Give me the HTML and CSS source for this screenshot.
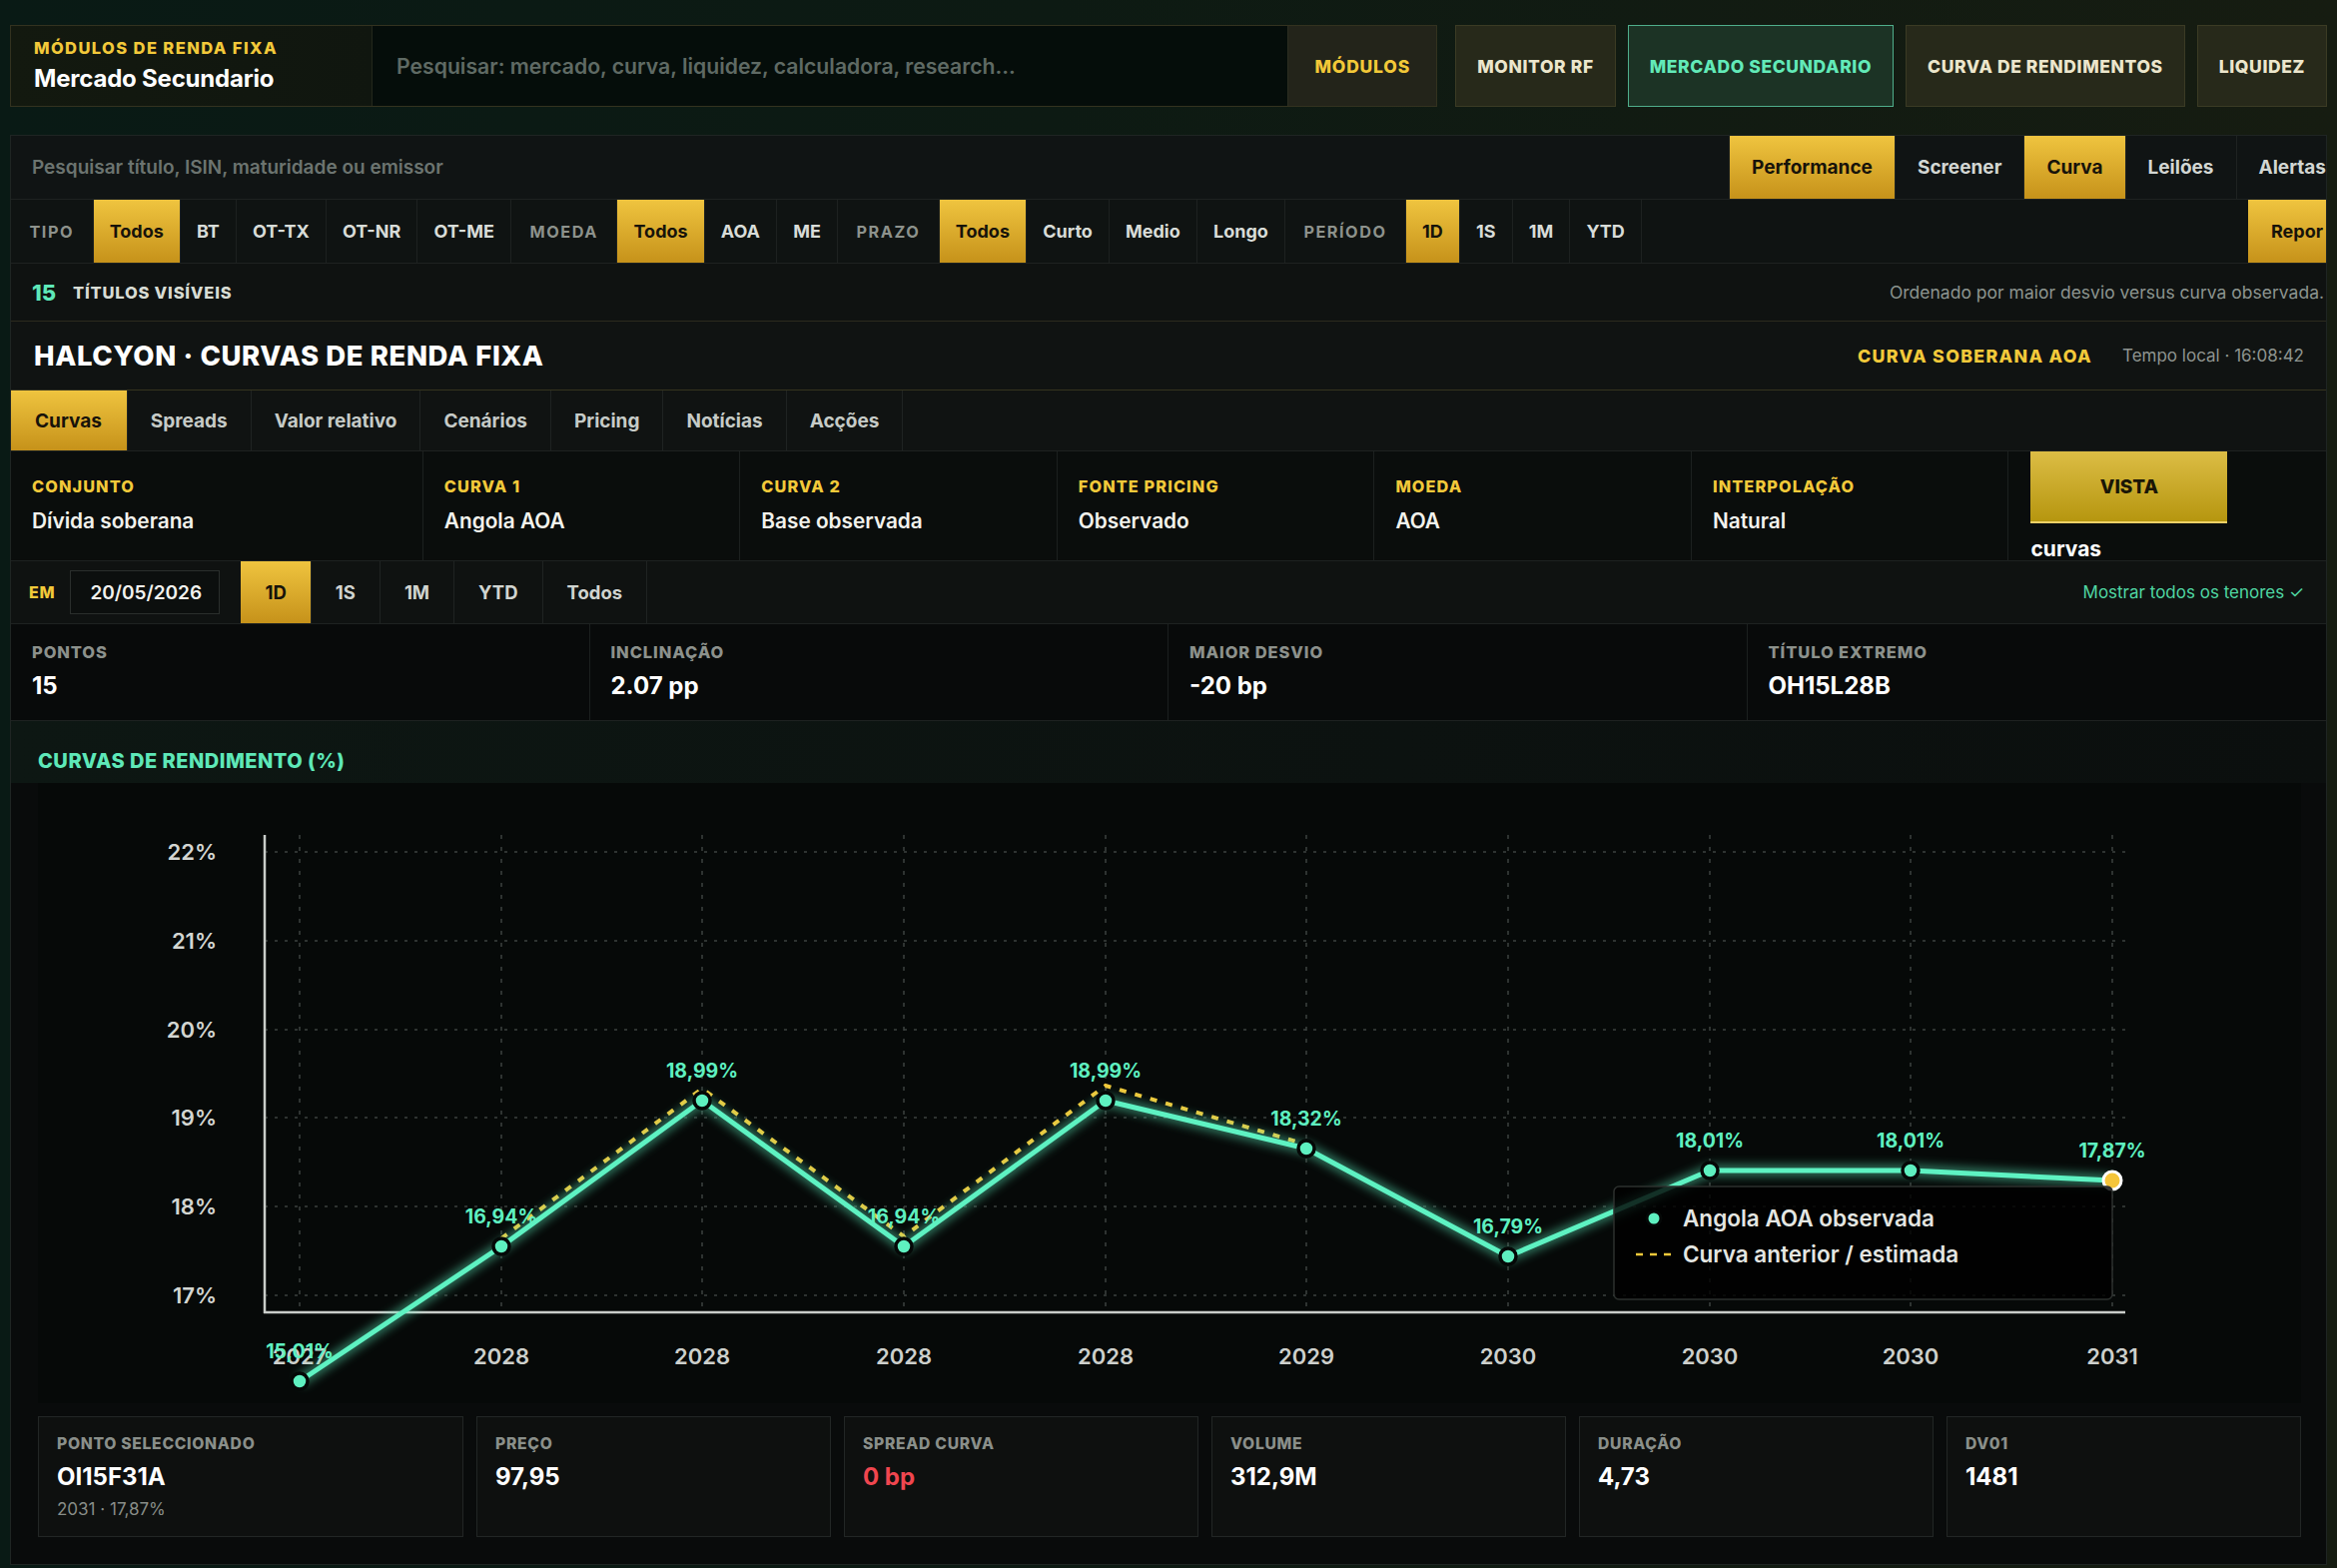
FILE: index.html
```html
<!DOCTYPE html>
<html lang="pt">
<head>
<meta charset="utf-8">
<title>Mercado Secundario</title>
<link rel="stylesheet" href="styles.css">
</head>
<body>
<div class="page">
  <header class="topbar">
    <div class="topgroup">
      <div class="brand">
        <div class="brand-kicker">MÓDULOS DE RENDA FIXA</div>
        <div class="brand-title">Mercado Secundario</div>
      </div>
      <div class="top-search">Pesquisar: mercado, curva, liquidez, calculadora, research...</div>
      <div class="top-modules">MÓDULOS</div>
    </div>
    <nav class="topnav">
      <span class="nav-btn">MONITOR RF</span>
      <span class="nav-btn active">MERCADO SECUNDARIO</span>
      <span class="nav-btn">CURVA DE RENDIMENTOS</span>
      <span class="nav-btn">LIQUIDEZ</span>
    </nav>
  </header>

  <main class="panel">
    <div class="row search-row">
      <div class="search-ph">Pesquisar título, ISIN, maturidade ou emissor</div>
      <div class="seg">
        <span class="seg-item on">Performance</span>
        <span class="seg-item">Screener</span>
        <span class="seg-item on">Curva</span>
        <span class="seg-item">Leilões</span>
        <span class="seg-item">Alertas</span>
      </div>
    </div>

    <div class="row filter-row">
      <span class="f-label">TIPO</span>
      <span class="f-opt on">Todos</span>
      <span class="f-opt">BT</span>
      <span class="f-opt">OT-TX</span>
      <span class="f-opt">OT-NR</span>
      <span class="f-opt">OT-ME</span>
      <span class="f-label">MOEDA</span>
      <span class="f-opt on">Todos</span>
      <span class="f-opt">AOA</span>
      <span class="f-opt">ME</span>
      <span class="f-label">PRAZO</span>
      <span class="f-opt on">Todos</span>
      <span class="f-opt">Curto</span>
      <span class="f-opt">Medio</span>
      <span class="f-opt">Longo</span>
      <span class="f-label">PERÍODO</span>
      <span class="f-opt on">1D</span>
      <span class="f-opt">1S</span>
      <span class="f-opt">1M</span>
      <span class="f-opt">YTD</span>
      <span class="f-spacer"></span>
      <span class="f-opt on repor">Repor</span>
    </div>

    <div class="row count-row">
      <div class="count-left"><span class="count-num">15</span><span class="count-txt">TÍTULOS VISÍVEIS</span></div>
      <div class="count-right">Ordenado por maior desvio versus curva observada.</div>
    </div>

    <div class="row title-row">
      <h1 class="title">HALCYON · CURVAS DE RENDA FIXA</h1>
      <div class="title-meta">
        <span class="title-tag">CURVA SOBERANA AOA</span>
        <span class="title-time">Tempo local · 16:08:42</span>
      </div>
    </div>

    <div class="row tabs-row">
      <span class="tab on">Curvas</span>
      <span class="tab">Spreads</span>
      <span class="tab">Valor relativo</span>
      <span class="tab">Cenários</span>
      <span class="tab">Pricing</span>
      <span class="tab">Notícias</span>
      <span class="tab">Acções</span>
    </div>

    <div class="params">
      <div class="param"><div class="p-label">CONJUNTO</div><div class="p-value">Dívida soberana</div></div>
      <div class="param"><div class="p-label">CURVA 1</div><div class="p-value">Angola AOA</div></div>
      <div class="param"><div class="p-label">CURVA 2</div><div class="p-value">Base observada</div></div>
      <div class="param"><div class="p-label">FONTE PRICING</div><div class="p-value">Observado</div></div>
      <div class="param"><div class="p-label">MOEDA</div><div class="p-value">AOA</div></div>
      <div class="param"><div class="p-label">INTERPOLAÇÃO</div><div class="p-value">Natural</div></div>
      <div class="param vista"><div class="vista-btn">VISTA</div><div class="vista-txt">curvas</div></div>
    </div>

    <div class="row date-row">
      <span class="em">EM</span>
      <span class="date-box">20/05/2026</span>
      <div class="date-tabs">
        <span class="d-tab on">1D</span>
        <span class="d-tab">1S</span>
        <span class="d-tab">1M</span>
        <span class="d-tab">YTD</span>
        <span class="d-tab">Todos</span>
      </div>
      <span class="show-all">Mostrar todos os tenores ✓</span>
    </div>

    <div class="stats">
      <div class="stat"><div class="s-label">PONTOS</div><div class="s-value">15</div></div>
      <div class="stat"><div class="s-label">INCLINAÇÃO</div><div class="s-value">2.07 pp</div></div>
      <div class="stat"><div class="s-label">MAIOR DESVIO</div><div class="s-value">-20 bp</div></div>
      <div class="stat"><div class="s-label">TÍTULO EXTREMO</div><div class="s-value">OH15L28B</div></div>
    </div>

    <section class="chart-sec">
      <div class="chart-head">CURVAS DE RENDIMENTO (%)</div>
      <div class="plot">
        <svg class="plot-svg" width="2266" height="621" viewBox="38 784 2266 621" xmlns="http://www.w3.org/2000/svg">
          <defs>
            <filter id="glow" filterUnits="userSpaceOnUse" x="38" y="784" width="2266" height="621">
              <feGaussianBlur stdDeviation="5"/>
            </filter>
          </defs>
          <g class="grid-h">
            <line x1="265" y1="853" x2="2128" y2="853"/>
            <line x1="265" y1="942" x2="2128" y2="942"/>
            <line x1="265" y1="1031" x2="2128" y2="1031"/>
            <line x1="265" y1="1119" x2="2128" y2="1119"/>
            <line x1="265" y1="1208" x2="2128" y2="1208"/>
            <line x1="265" y1="1297" x2="2128" y2="1297"/>
          </g>
          <g class="grid-v">
            <line x1="300" y1="836" x2="300" y2="1314"/>
            <line x1="502" y1="836" x2="502" y2="1314"/>
            <line x1="703" y1="836" x2="703" y2="1314"/>
            <line x1="905" y1="836" x2="905" y2="1314"/>
            <line x1="1107" y1="836" x2="1107" y2="1314"/>
            <line x1="1308" y1="836" x2="1308" y2="1314"/>
            <line x1="1510" y1="836" x2="1510" y2="1314"/>
            <line x1="1712" y1="836" x2="1712" y2="1314"/>
            <line x1="1913" y1="836" x2="1913" y2="1314"/>
            <line x1="2115" y1="836" x2="2115" y2="1314"/>
          </g>
          <line class="axis" x1="265" y1="836" x2="265" y2="1315"/>
          <line class="axis" x1="264" y1="1314" x2="2128" y2="1314"/>
          <g class="ylab">
            <text x="217" y="861">22%</text>
            <text x="217" y="950">21%</text>
            <text x="217" y="1039">20%</text>
            <text x="217" y="1127">19%</text>
            <text x="217" y="1216">18%</text>
            <text x="217" y="1305">17%</text>
          </g>
          <g class="xlab">
            <text x="300" y="1366">2027</text>
            <text x="502" y="1366">2028</text>
            <text x="703" y="1366">2028</text>
            <text x="905" y="1366">2028</text>
            <text x="1107" y="1366">2028</text>
            <text x="1308" y="1366">2029</text>
            <text x="1510" y="1366">2030</text>
            <text x="1712" y="1366">2030</text>
            <text x="1913" y="1366">2030</text>
            <text x="2115" y="1366">2031</text>
          </g>
          <polyline class="prev" points="502,1240 703,1090 905,1238 1107,1087 1308,1146"/>
          <polyline class="glow" filter="url(#glow)" points="300,1383 502,1248 703,1102 905,1248 1107,1102 1308,1150 1510,1258 1712,1172 1913,1172 2115,1182"/>
          <polyline class="curve" points="300,1383 502,1248 703,1102 905,1248 1107,1102 1308,1150 1510,1258 1712,1172 1913,1172 2115,1182"/>
          <g class="pts">
            <circle cx="300" cy="1383" r="8"/>
            <circle cx="502" cy="1248" r="8"/>
            <circle cx="703" cy="1102" r="8"/>
            <circle cx="905" cy="1248" r="8"/>
            <circle cx="1107" cy="1102" r="8"/>
            <circle cx="1308" cy="1150" r="8"/>
            <circle cx="1510" cy="1258" r="8"/>
            <circle cx="1712" cy="1172" r="8"/>
            <circle cx="1913" cy="1172" r="8"/>
          </g>
          <circle class="pt-sel" cx="2115" cy="1182" r="9"/>
          <g class="plab">
            <text x="300" y="1360">15,01%</text>
            <text x="502" y="1225">16,94%</text>
            <text x="703" y="1079">18,99%</text>
            <text x="905" y="1225">16,94%</text>
            <text x="1107" y="1079">18,99%</text>
            <text x="1308" y="1127">18,32%</text>
            <text x="1510" y="1235">16,79%</text>
            <text x="1712" y="1149">18,01%</text>
            <text x="1913" y="1149">18,01%</text>
            <text x="2115" y="1159">17,87%</text>
          </g>
          <g class="legend">
            <rect x="1616" y="1188" width="499" height="113" rx="5"/>
            <circle class="lg-dot" cx="1656" cy="1220" r="7"/>
            <text x="1685" y="1228">Angola AOA observada</text>
            <line class="lg-dash" x1="1638" y1="1256" x2="1676" y2="1256"/>
            <text x="1685" y="1264">Curva anterior / estimada</text>
          </g>
        </svg>
      </div>
      <div class="cards">
        <div class="card"><div class="c-label">PONTO SELECCIONADO</div><div class="c-value">OI15F31A</div><div class="c-sub">2031 · 17,87%</div></div>
        <div class="card"><div class="c-label">PREÇO</div><div class="c-value">97,95</div></div>
        <div class="card"><div class="c-label">SPREAD CURVA</div><div class="c-value neg">0 bp</div></div>
        <div class="card"><div class="c-label">VOLUME</div><div class="c-value">312,9M</div></div>
        <div class="card"><div class="c-label">DURAÇÃO</div><div class="c-value">4,73</div></div>
        <div class="card"><div class="c-label">DV01</div><div class="c-value">1481</div></div>
      </div>
    </section>
  </main>
</div>
</body>
</html>
```

FILE: styles.css
```css
* { box-sizing: border-box; }
html, body { margin: 0; padding: 0; }
body {
  width: 2340px;
  height: 1570px;
  overflow: hidden;
  font-family: Inter, "Noto Sans", "Liberation Sans", sans-serif;
  color: #e8ebe6;
  background: linear-gradient(90deg, #091a15 0%, #0d1a13 45%, #161c11 100%);
}
.page { padding: 25px 10px 0 10px; }

/* ---------- top bar ---------- */
.topbar { display: flex; height: 82px; gap: 18px; }
.topgroup {
  flex: 1; min-width: 0; display: flex;
  border: 1px solid #33321f;
}
.brand {
  width: 362px; flex: none;
  border-right: 1px solid #23271c;
  background: linear-gradient(90deg, #13190f, #10160f);
  padding-left: 23px;
  display: flex; flex-direction: column; justify-content: center; gap: 7px;
}
.brand-kicker { font-size: 16.5px; font-weight: 800; letter-spacing: 1.4px; color: #f2c93a; line-height: 18px; }
.brand-title { font-size: 24px; font-weight: 700; color: #ffffff; line-height: 29px; letter-spacing: -0.2px; }
.top-search {
  flex: 1; min-width: 0; background: #050d0a;
  display: flex; align-items: center; padding-left: 24px;
  font-size: 21.2px; font-weight: 600; color: #5f6a64; white-space: nowrap; overflow: hidden;
}
.top-modules {
  width: 149px; flex: none; background: #23241a; border-left: 1px solid #2c2d20;
  display: flex; align-items: center; justify-content: center;
  font-size: 17.5px; font-weight: 800; letter-spacing: 0.8px; color: #f2c838;
}
.topnav { display: flex; gap: 12px; flex: none; }
.nav-btn {
  display: flex; align-items: center; padding: 0 21px;
  background: #27291a; border: 1px solid #3b3b24;
  font-size: 17.5px; font-weight: 800; letter-spacing: 0.6px; color: #ece6cc;
  white-space: nowrap;
}
.nav-btn.active { background: #1c3325; border-color: #4fae8b; color: #62eab8; }

/* ---------- main panel ---------- */
.panel {
  margin-top: 28px;
  border: 1px solid #1f2523;
  background: #101413;
}
.row {
  display: flex; align-items: center;
  border-bottom: 1px solid #1e2221;
  overflow: hidden;
}
.search-row { height: 64px; background: #101414; }
.search-ph {
  flex: 1; min-width: 0; padding-left: 21px;
  font-size: 19px; font-weight: 600; color: #6c7470; white-space: nowrap;
}
.seg { display: flex; align-self: stretch; margin-right: -22px; flex: none; }
.seg-item {
  display: flex; align-items: center; padding: 0 22px;
  font-size: 19px; font-weight: 700; color: #d3d7d3;
  border-left: 1px solid #1f2322; white-space: nowrap;
}
.on {
  background: linear-gradient(180deg, #efc43f 0%, #c6921a 100%);
  color: #17130a !important;
}

.filter-row { height: 64px; background: #0f1312; }
.f-label, .f-opt {
  align-self: stretch; display: flex; align-items: center;
  border-right: 1px solid #1d2120; white-space: nowrap; flex: none;
}
.f-label { padding: 0 18.5px; font-size: 16.3px; font-weight: 700; letter-spacing: 1.5px; color: #8d928c; }
.f-opt { padding: 0 16.1px; font-size: 18px; font-weight: 700; color: #d8dcd8; }
.f-spacer { flex: 1; }
.f-opt.repor { padding: 0 0 0 23px; border-right: 0; width: 78px; }

.count-row { height: 58px; background: #0f1211; justify-content: space-between; border-bottom-color: #2c2b1e; }
.count-left { display: flex; align-items: center; padding-left: 21px; gap: 17px; }
.count-num { font-size: 22px; font-weight: 800; color: #5ee8b8; }
.count-txt { font-size: 16.5px; font-weight: 800; color: #d8dcd4; letter-spacing: 0.8px; }
.count-right { padding-right: 2px; font-size: 17.5px; color: #8c948f; white-space: nowrap; }

.title-row { height: 69px; background: #101312; justify-content: space-between; border-bottom-color: #36341f; }
.title { margin: 0; padding-left: 23px; font-size: 27.5px; font-weight: 800; letter-spacing: 0.6px; color: #ffffff; }
.title-meta { display: flex; align-items: center; gap: 30px; padding-right: 22px; }
.title-tag { font-size: 17.8px; font-weight: 800; letter-spacing: 1.3px; color: #f2c93a; }
.title-time { font-size: 17px; color: #8e948f; }

.tabs-row { height: 61px; background: #101312; }
.tab {
  align-self: stretch; display: flex; align-items: center; padding: 0 23px;
  font-size: 19px; font-weight: 700; color: #c6cbc7;
  border-right: 1px solid #1f2322; white-space: nowrap;
}
.tab.on { padding: 0 25px 0 24px; }

.params {
  display: grid; grid-template-columns: 1.3fr repeat(6, 1fr);
  height: 110px; background: #0a0d0c; border-bottom: 1px solid #1e2221;
}
.param { border-right: 1px solid #1c201f; padding: 26px 21px 0 21px; }
.param:last-child { border-right: 0; }
.p-label { font-size: 16.3px; font-weight: 800; letter-spacing: 1.1px; color: #f2c93a; line-height: 18px; }
.p-value { margin-top: 14px; font-size: 20.8px; font-weight: 600; color: #f2f2ec; line-height: 24px; }
.vista { padding: 0 22px; }
.vista-btn {
  width: 197px; height: 72px;
  background: linear-gradient(180deg, #dcbd45 0%, #b6960f 100%);
  border-bottom: 2px solid #ecd067;
  display: flex; align-items: center; justify-content: center;
  font-size: 19px; font-weight: 800; color: #1a1606;
}
.vista-txt { margin-top: 14px; font-size: 21px; font-weight: 700; color: #ffffff; line-height: 24px; }

.date-row { height: 63px; background: #0f1211; }
.em { padding-left: 18px; font-size: 16px; font-weight: 800; letter-spacing: 0.8px; color: #f2c93a; }
.date-box {
  margin-left: 15px; width: 150px; height: 44px;
  display: flex; align-items: center; padding-left: 19px;
  background: #0c0f0e; border: 1px solid #2a2e2c;
  font-size: 19px; font-weight: 600; color: #f2f2ee;
}
.date-tabs { display: flex; align-self: stretch; margin-left: 21px; }
.d-tab {
  display: flex; align-items: center; padding: 0 24px;
  font-size: 18.5px; font-weight: 700; color: #d0d4d0;
  border-right: 1px solid #1f2322;
}
.show-all { margin-left: auto; padding-right: 22px; font-size: 17px; color: #4fd6a2; white-space: nowrap; }

.stats {
  display: grid; grid-template-columns: repeat(4, 1fr);
  height: 97px; background: #080a0a; border-bottom: 1px solid #1e2221;
}
.stat { border-right: 1px solid #1c201f; padding: 19px 21px 0 21px; }
.stat:last-child { border-right: 0; }
.s-label { font-size: 16.5px; font-weight: 800; letter-spacing: 0.9px; color: #8c918c; line-height: 18px; }
.s-value { margin-top: 10px; font-size: 24px; font-weight: 700; color: #ffffff; line-height: 30px; }

/* ---------- chart ---------- */
.chart-sec { background: #090b0b; padding: 0 25px 27px 27px; }
.chart-head {
  height: 62px; margin: 0 -25px 0 -27px; padding: 28px 0 0 27px;
  background: linear-gradient(90deg, #0d1713 0%, #0c1210 60%, #0b0f0e 100%);
  font-size: 20px; font-weight: 800; letter-spacing: 0.5px; color: #5ee8b8; line-height: 24px;
}
.plot { height: 621px; background: #060908; }
.plot-svg { display: block; overflow: visible; }
.grid-h line { stroke: #3c423f; stroke-width: 1.5; stroke-dasharray: 3 7; }
.grid-v line { stroke: #3c423f; stroke-width: 1.5; stroke-dasharray: 4 8; }
.axis { stroke: #c9cdc9; stroke-width: 2.5; }
.ylab text { font-family: Inter, sans-serif; font-size: 22px; font-weight: 600; fill: #d3d6d2; text-anchor: end; }
.xlab text { font-family: Inter, sans-serif; font-size: 22px; font-weight: 600; fill: #cdd0cc; text-anchor: middle; }
.prev { fill: none; stroke: #f0c83a; stroke-width: 4; stroke-dasharray: 7 9; }
.glow { fill: none; stroke: #5ef0c0; stroke-width: 12; opacity: 0.45; stroke-linejoin: round; }
.curve { fill: none; stroke: #5ef2c2; stroke-width: 5; stroke-linejoin: round; stroke-linecap: round; }
.pts circle { fill: #5ef0c0; stroke: #050807; stroke-width: 3.5; }
.pt-sel { fill: #f5c53a; stroke: #ffffff; stroke-width: 3; }
.plab text { font-family: Inter, sans-serif; font-size: 19.5px; font-weight: 700; fill: #5ef0c0; text-anchor: middle; }
.legend rect { fill: rgba(0, 0, 0, 0.8); stroke: #2c302e; stroke-width: 1.5; }
.legend text { font-family: Inter, sans-serif; font-size: 22.5px; font-weight: 600; fill: #e4e6e2; }
.lg-dot { fill: #5ef0c0; stroke: #050807; stroke-width: 3; }
.lg-dash { stroke: #f0c83a; stroke-width: 2.5; stroke-dasharray: 7 7; }

.cards {
  margin-top: 13px;
  display: grid; grid-template-columns: 1.2fr repeat(5, 1fr); gap: 13px;
}
.card { height: 121px; background: #0e100f; border: 1px solid #222625; padding: 18px 18px 0 18px; }
.c-label { font-size: 15.7px; font-weight: 800; letter-spacing: 0.7px; color: #8a8f8a; line-height: 18px; }
.c-value { margin-top: 9px; font-size: 24px; font-weight: 700; color: #ffffff; line-height: 29px; }
.c-value.neg { color: #f0464f; }
.c-sub { margin-top: 8px; font-size: 17px; color: #888d88; line-height: 20px; }
```
